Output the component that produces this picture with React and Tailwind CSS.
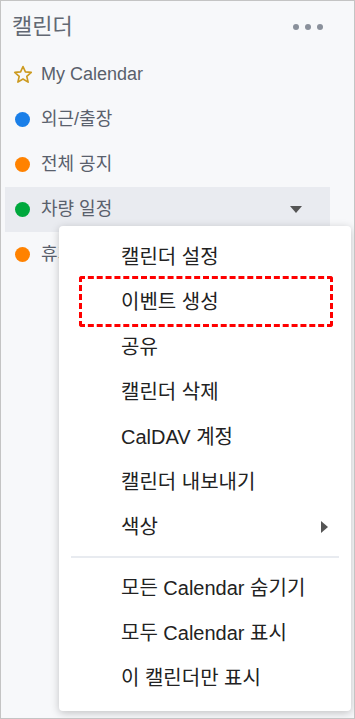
import React from "react";

const FONT = { fontFamily: '"Liberation Sans", "Noto Sans CJK KR", sans-serif' };

function Dot({ color }) {
  return <span className={`inline-block h-[15px] w-[15px] rounded-full ${color}`} />;
}

function Star() {
  return (
    <svg width="20" height="19" viewBox="0 0 24 23" className="shrink-0">
      <path
        d="M12 1.8l2.9 6.6 7.1.6-5.4 4.7 1.6 7-6.2-3.7-6.2 3.7 1.6-7L2 9l7.1-.6z"
        fill="none"
        stroke="#cc9a1f"
        strokeWidth="2"
        strokeLinejoin="round"
      />
    </svg>
  );
}

function Row({ icon, label, active, caret }) {
  return (
    <div
      className={`flex h-[45px] items-center pl-[10px] pr-[28px] ${active ? "bg-[#e9ebf0]" : ""}`}
    >
      <span className="flex w-[15px] shrink-0 justify-center">{icon}</span>
      <span className="ml-[11px] flex-1 text-[18px] text-[#59606c]">{label}</span>
      {caret ? (
        <svg width="12" height="7" viewBox="0 0 12 7">
          <path d="M0 0h12L6 7z" fill="#555" />
        </svg>
      ) : null}
    </div>
  );
}

function MenuItem({ children, sub }) {
  return (
    <div className="flex h-[45px] items-center pl-[62px] pr-[23px] text-[20px] text-[#222]">
      <span className="flex-1 leading-none">{children}</span>
      {sub ? (
        <svg width="7" height="12" viewBox="0 0 7 12">
          <path d="M0 0v12l7-6z" fill="#555" />
        </svg>
      ) : null}
    </div>
  );
}

export default function App() {
  return (
    <div
      style={FONT}
      className="relative h-[719px] w-[355px] overflow-hidden border border-[#c4c4c4] bg-[#f7f8fa]"
    >
      {/* header */}
      <div className="flex h-[51px] items-center justify-between pl-[11px] pr-[31px]">
        <span className="text-[22px] text-[#626873]">캘린더</span>
        <div className="flex gap-[6px]">
          <span className="h-[6px] w-[6px] rounded-full bg-[#8a909b]" />
          <span className="h-[6px] w-[6px] rounded-full bg-[#8a909b]" />
          <span className="h-[6px] w-[6px] rounded-full bg-[#8a909b]" />
        </div>
      </div>

      {/* calendar list */}
      <div className="w-[333px] px-[4px]">
        <Row icon={<Star />} label="My Calendar" />
        <Row icon={<Dot color="bg-[#1a7fe8]" />} label="외근/출장" />
        <Row icon={<Dot color="bg-[#ff8200]" />} label="전체 공지" />
        <Row icon={<Dot color="bg-[#00a83d]" />} label="차량 일정" active caret />
        <Row icon={<Dot color="bg-[#ff8200]" />} label="휴가" />
      </div>

      {/* context menu */}
      <div className="absolute left-[58px] top-[225px] w-[292px] rounded-[4px] bg-white pb-[11px] pt-[8px] shadow-[0_2px_8px_rgba(0,0,0,0.22)]">
        <MenuItem>캘린더 설정</MenuItem>
        <MenuItem>이벤트 생성</MenuItem>
        <MenuItem>공유</MenuItem>
        <MenuItem>캘린더 삭제</MenuItem>
        <MenuItem>CalDAV 계정</MenuItem>
        <MenuItem>캘린더 내보내기</MenuItem>
        <MenuItem sub>색상</MenuItem>
        <div className="mx-[12px] my-[7px] h-[2px] bg-[#e8ebf0]" />
        <MenuItem>모든 Calendar 숨기기</MenuItem>
        <MenuItem>모두 Calendar 표시</MenuItem>
        <MenuItem>이 캘린더만 표시</MenuItem>

        <div className="absolute left-[20px] top-[50px] h-[51px] w-[254px] rounded-[3px] border-[3px] border-dashed border-[#ff0000]" />
      </div>
    </div>
  );
}
